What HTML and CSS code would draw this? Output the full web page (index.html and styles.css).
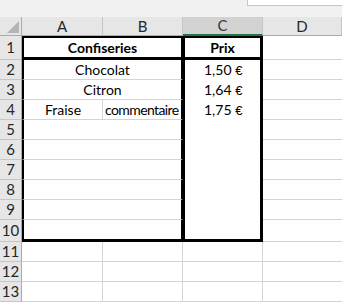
FILE: index.html
```html
<!DOCTYPE html>
<html lang="fr">
<head>
<meta charset="utf-8">
<title>Confiseries</title>
<link rel="stylesheet" href="styles.css">
</head>
<body>
<div class="top"><div class="namebox"></div></div>
<div class="sheet">
  <div class="corner"><span class="tri"></span></div>
  <div class="ch">A</div>
  <div class="ch">B</div>
  <div class="ch sel">C</div>
  <div class="ch">D</div>

  <div class="rh">1</div>
  <div class="c ab r1 bold">Confiseries</div>
  <div class="c cc r1 bold">Prix</div>
  <div class="c d"></div>

  <div class="rh">2</div>
  <div class="c ab">Chocolat</div>
  <div class="c cc price">1,50 <span class="eur">€</span></div>
  <div class="c d"></div>

  <div class="rh">3</div>
  <div class="c ab">Citron</div>
  <div class="c cc price">1,64 <span class="eur">€</span></div>
  <div class="c d"></div>

  <div class="rh">4</div>
  <div class="c a">Fraise</div>
  <div class="c b left tight">commentaire</div>
  <div class="c cc price">1,75 <span class="eur">€</span></div>
  <div class="c d"></div>

  <div class="rh">5</div>
  <div class="c ab"></div>
  <div class="c cc"></div>
  <div class="c d"></div>

  <div class="rh">6</div>
  <div class="c ab"></div>
  <div class="c cc"></div>
  <div class="c d"></div>

  <div class="rh">7</div>
  <div class="c ab"></div>
  <div class="c cc"></div>
  <div class="c d"></div>

  <div class="rh">8</div>
  <div class="c ab"></div>
  <div class="c cc"></div>
  <div class="c d"></div>

  <div class="rh">9</div>
  <div class="c ab"></div>
  <div class="c cc"></div>
  <div class="c d"></div>

  <div class="rh">10</div>
  <div class="c ab r10"></div>
  <div class="c cc r10"></div>
  <div class="c d"></div>

  <div class="rh">11</div>
  <div class="c"></div>
  <div class="c"></div>
  <div class="c"></div>
  <div class="c d"></div>

  <div class="rh">12</div>
  <div class="c"></div>
  <div class="c"></div>
  <div class="c"></div>
  <div class="c d"></div>

  <div class="rh">13</div>
  <div class="c"></div>
  <div class="c"></div>
  <div class="c"></div>
  <div class="c d"></div>
</div>
</body>
</html>
```

FILE: styles.css
```css
* { box-sizing: border-box; }

html, body {
  margin: 0;
  padding: 0;
}

body {
  width: 342px;
  height: 302px;
  overflow: hidden;
  background: #ffffff;
  font-family: Lato, "Liberation Sans", sans-serif;
  font-size: 14px;
  color: #000000;
}

.top {
  height: 17px;
  background: #f1f1f1;
  display: flex;
  justify-content: flex-end;
}

.namebox {
  width: 95px;
  height: 6px;
  background: #ffffff;
  border-left: 1px solid #c6c6c6;
  border-bottom: 1px solid #c6c6c6;
}

.sheet {
  display: grid;
  grid-template-columns: 22px 81px 80px 80px 79px;
  grid-template-rows: 19px 24px repeat(8, 20px) 22px repeat(3, 20px);
}

.corner {
  background: #e6e6e6;
  border-right: 1px solid #ababab;
  border-bottom: 1px solid #ababab;
  display: flex;
  align-items: flex-end;
  justify-content: flex-end;
  padding: 0 2px 2px 0;
}

.tri {
  width: 0;
  height: 0;
  border-left: 12px solid transparent;
  border-bottom: 12px solid #b4b4b4;
}

.ch {
  background: #e6e6e6;
  border-right: 1px solid #c6c6c6;
  border-bottom: 1px solid #ababab;
  display: flex;
  align-items: center;
  justify-content: center;
  color: #262626;
  font-size: 15px;
  line-height: 1;
}

.ch.sel {
  background: #d2d2d2;
  border-bottom: 2px solid #217346;
  color: #3a3a3a;
}

.rh {
  background: #e6e6e6;
  border-right: 1px solid #ababab;
  border-bottom: 1px solid #c6c6c6;
  display: flex;
  align-items: center;
  justify-content: center;
  color: #262626;
  font-size: 15px;
  line-height: 1;
}

.c {
  display: block;
  min-width: 0;
  border-right: 1px solid #d4d4d4;
  border-bottom: 1px solid #d4d4d4;
  padding-top: 3px;
  line-height: 14px;
  text-align: center;
  white-space: nowrap;
  overflow: hidden;
}

.c.left {
  text-align: left;
  padding-left: 2px;
}

.c.tight {
  letter-spacing: -0.6px;
}

.c.price {
  text-align: left;
  padding-left: 19px;
}

.eur {
  font-family: "Liberation Sans", Arial, sans-serif;
  font-size: 13px;
}

.c.d { border-right: 0; }

.bold { font-weight: 700; }

.ab {
  grid-column: span 2;
  border-left: 2px solid #000;
  border-right: 2px solid #000;
}

.a {
  border-left: 2px solid #000;
}

.b {
  border-right: 2px solid #000;
}

.cc {
  border-left: 2px solid #000;
  border-right: 3px solid #000;
  border-bottom: 0;
}

.r1 {
  border-top: 2px solid #000;
  border-bottom: 3px solid #000;
}

.r10 {
  border-bottom: 3px solid #000;
}
```
